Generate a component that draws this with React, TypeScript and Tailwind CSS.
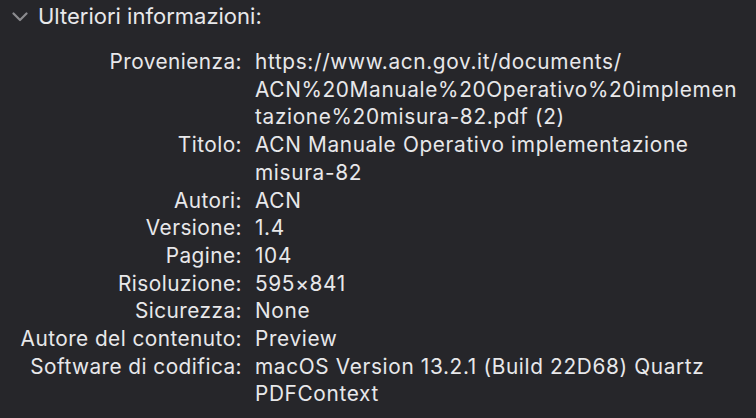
const rows: { label: string; lines: string[] }[] = [
  {
    label: "Provenienza:",
    lines: [
      "https://www.acn.gov.it/documents/",
      "ACN%20Manuale%20Operativo%20implemen",
      "tazione%20misura-82.pdf (2)",
    ],
  },
  { label: "Titolo:", lines: ["ACN Manuale Operativo implementazione", "misura-82"] },
  { label: "Autori:", lines: ["ACN"] },
  { label: "Versione:", lines: ["1.4"] },
  { label: "Pagine:", lines: ["104"] },
  { label: "Risoluzione:", lines: ["595×841"] },
  { label: "Sicurezza:", lines: ["None"] },
  { label: "Autore del contenuto:", lines: ["Preview"] },
  { label: "Software di codifica:", lines: ["macOS Version 13.2.1 (Build 22D68) Quartz", "PDFContext"] },
];

export default function App() {
  return (
    <div
      className="w-[756px] h-[418px] overflow-hidden bg-[#26262a] text-[#e8e8ea] text-[20.8px] leading-[27.7px]"
      style={{ fontFamily: "Inter, 'Noto Sans', sans-serif" }}
    >
      <div className="flex items-center h-[34px] pl-[12px] gap-[10px]">
        <svg width="16" height="10" viewBox="0 0 16 10" fill="none">
          <path d="M1.5 1.5 L8 8 L14.5 1.5" stroke="#8b8b8f" strokeWidth="2.2" strokeLinecap="round" strokeLinejoin="round" />
        </svg>
        <span className="text-[22px]">Ulteriori informazioni:</span>
      </div>
      <div className="grid grid-cols-[242px_1fr] gap-x-[13px] pt-[14px]">
        {rows.map((r) => (
          <div key={r.label} className="contents">
            <div className="text-right whitespace-nowrap tracking-[0.45px]">{r.label}</div>
            <div className="whitespace-nowrap tracking-[0.65px]">
              {r.lines.map((l) => (
                <div key={l}>{l}</div>
              ))}
            </div>
          </div>
        ))}
      </div>
    </div>
  );
}
